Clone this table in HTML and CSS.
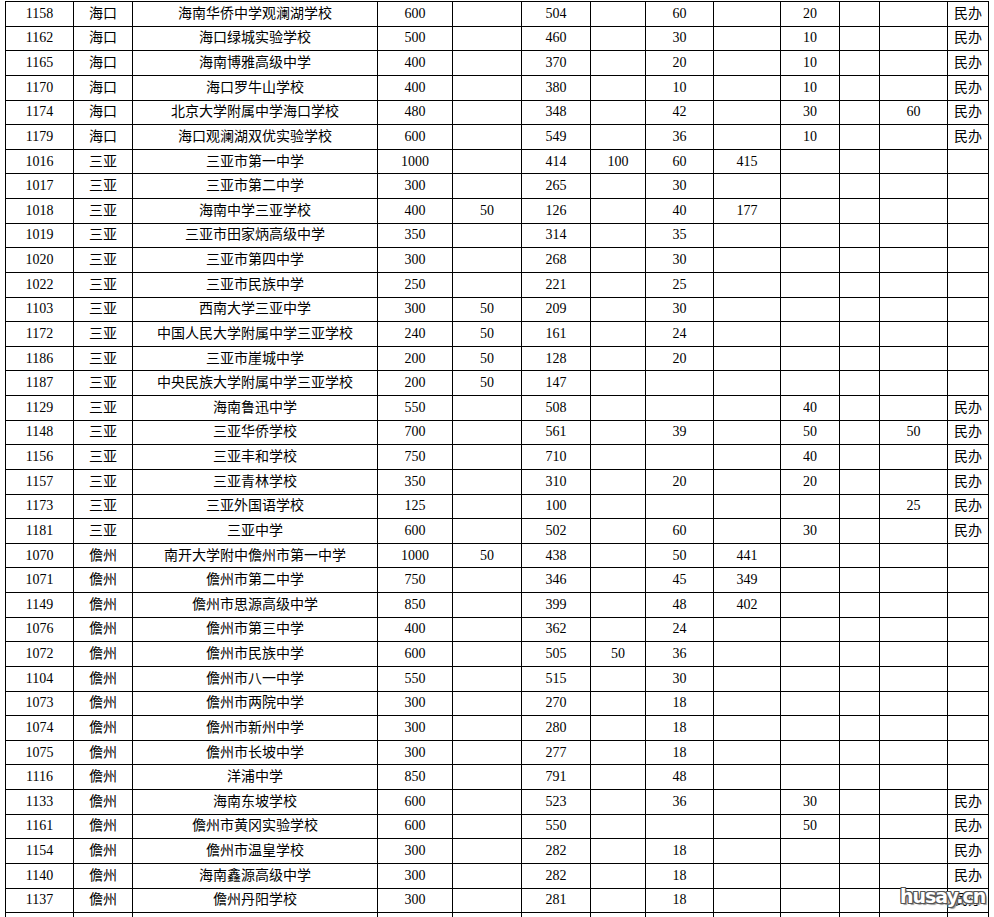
FILE: index.html
```html
<!DOCTYPE html>
<html lang="zh-CN">
<head>
<meta charset="utf-8">
<title>招生计划表</title>
<link rel="stylesheet" href="styles.css">
</head>
<body>
<div class="page">
<table class="plan">
<colgroup>
<col class="c1"><col class="c2"><col class="c3"><col class="c4"><col class="c5"><col class="c6"><col class="c7"><col class="c8"><col class="c9"><col class="c10"><col class="c11"><col class="c12"><col class="c13">
</colgroup>
<tbody>
<tr><td>1158</td><td>海口</td><td>海南华侨中学观澜湖学校</td><td>600</td><td></td><td>504</td><td></td><td>60</td><td></td><td>20</td><td></td><td></td><td>民办</td></tr>
<tr><td>1162</td><td>海口</td><td>海口绿城实验学校</td><td>500</td><td></td><td>460</td><td></td><td>30</td><td></td><td>10</td><td></td><td></td><td>民办</td></tr>
<tr><td>1165</td><td>海口</td><td>海南博雅高级中学</td><td>400</td><td></td><td>370</td><td></td><td>20</td><td></td><td>10</td><td></td><td></td><td>民办</td></tr>
<tr><td>1170</td><td>海口</td><td>海口罗牛山学校</td><td>400</td><td></td><td>380</td><td></td><td>10</td><td></td><td>10</td><td></td><td></td><td>民办</td></tr>
<tr><td>1174</td><td>海口</td><td>北京大学附属中学海口学校</td><td>480</td><td></td><td>348</td><td></td><td>42</td><td></td><td>30</td><td></td><td>60</td><td>民办</td></tr>
<tr><td>1179</td><td>海口</td><td>海口观澜湖双优实验学校</td><td>600</td><td></td><td>549</td><td></td><td>36</td><td></td><td>10</td><td></td><td></td><td>民办</td></tr>
<tr><td>1016</td><td>三亚</td><td>三亚市第一中学</td><td>1000</td><td></td><td>414</td><td>100</td><td>60</td><td>415</td><td></td><td></td><td></td><td></td></tr>
<tr><td>1017</td><td>三亚</td><td>三亚市第二中学</td><td>300</td><td></td><td>265</td><td></td><td>30</td><td></td><td></td><td></td><td></td><td></td></tr>
<tr><td>1018</td><td>三亚</td><td>海南中学三亚学校</td><td>400</td><td>50</td><td>126</td><td></td><td>40</td><td>177</td><td></td><td></td><td></td><td></td></tr>
<tr><td>1019</td><td>三亚</td><td>三亚市田家炳高级中学</td><td>350</td><td></td><td>314</td><td></td><td>35</td><td></td><td></td><td></td><td></td><td></td></tr>
<tr><td>1020</td><td>三亚</td><td>三亚市第四中学</td><td>300</td><td></td><td>268</td><td></td><td>30</td><td></td><td></td><td></td><td></td><td></td></tr>
<tr><td>1022</td><td>三亚</td><td>三亚市民族中学</td><td>250</td><td></td><td>221</td><td></td><td>25</td><td></td><td></td><td></td><td></td><td></td></tr>
<tr><td>1103</td><td>三亚</td><td>西南大学三亚中学</td><td>300</td><td>50</td><td>209</td><td></td><td>30</td><td></td><td></td><td></td><td></td><td></td></tr>
<tr><td>1172</td><td>三亚</td><td>中国人民大学附属中学三亚学校</td><td>240</td><td>50</td><td>161</td><td></td><td>24</td><td></td><td></td><td></td><td></td><td></td></tr>
<tr><td>1186</td><td>三亚</td><td>三亚市崖城中学</td><td>200</td><td>50</td><td>128</td><td></td><td>20</td><td></td><td></td><td></td><td></td><td></td></tr>
<tr><td>1187</td><td>三亚</td><td>中央民族大学附属中学三亚学校</td><td>200</td><td>50</td><td>147</td><td></td><td></td><td></td><td></td><td></td><td></td><td></td></tr>
<tr><td>1129</td><td>三亚</td><td>海南鲁迅中学</td><td>550</td><td></td><td>508</td><td></td><td></td><td></td><td>40</td><td></td><td></td><td>民办</td></tr>
<tr><td>1148</td><td>三亚</td><td>三亚华侨学校</td><td>700</td><td></td><td>561</td><td></td><td>39</td><td></td><td>50</td><td></td><td>50</td><td>民办</td></tr>
<tr><td>1156</td><td>三亚</td><td>三亚丰和学校</td><td>750</td><td></td><td>710</td><td></td><td></td><td></td><td>40</td><td></td><td></td><td>民办</td></tr>
<tr><td>1157</td><td>三亚</td><td>三亚青林学校</td><td>350</td><td></td><td>310</td><td></td><td>20</td><td></td><td>20</td><td></td><td></td><td>民办</td></tr>
<tr><td>1173</td><td>三亚</td><td>三亚外国语学校</td><td>125</td><td></td><td>100</td><td></td><td></td><td></td><td></td><td></td><td>25</td><td>民办</td></tr>
<tr><td>1181</td><td>三亚</td><td>三亚中学</td><td>600</td><td></td><td>502</td><td></td><td>60</td><td></td><td>30</td><td></td><td></td><td>民办</td></tr>
<tr><td>1070</td><td>儋州</td><td>南开大学附中儋州市第一中学</td><td>1000</td><td>50</td><td>438</td><td></td><td>50</td><td>441</td><td></td><td></td><td></td><td></td></tr>
<tr><td>1071</td><td>儋州</td><td>儋州市第二中学</td><td>750</td><td></td><td>346</td><td></td><td>45</td><td>349</td><td></td><td></td><td></td><td></td></tr>
<tr><td>1149</td><td>儋州</td><td>儋州市思源高级中学</td><td>850</td><td></td><td>399</td><td></td><td>48</td><td>402</td><td></td><td></td><td></td><td></td></tr>
<tr><td>1076</td><td>儋州</td><td>儋州市第三中学</td><td>400</td><td></td><td>362</td><td></td><td>24</td><td></td><td></td><td></td><td></td><td></td></tr>
<tr><td>1072</td><td>儋州</td><td>儋州市民族中学</td><td>600</td><td></td><td>505</td><td>50</td><td>36</td><td></td><td></td><td></td><td></td><td></td></tr>
<tr><td>1104</td><td>儋州</td><td>儋州市八一中学</td><td>550</td><td></td><td>515</td><td></td><td>30</td><td></td><td></td><td></td><td></td><td></td></tr>
<tr><td>1073</td><td>儋州</td><td>儋州市两院中学</td><td>300</td><td></td><td>270</td><td></td><td>18</td><td></td><td></td><td></td><td></td><td></td></tr>
<tr><td>1074</td><td>儋州</td><td>儋州市新州中学</td><td>300</td><td></td><td>280</td><td></td><td>18</td><td></td><td></td><td></td><td></td><td></td></tr>
<tr><td>1075</td><td>儋州</td><td>儋州市长坡中学</td><td>300</td><td></td><td>277</td><td></td><td>18</td><td></td><td></td><td></td><td></td><td></td></tr>
<tr><td>1116</td><td>儋州</td><td>洋浦中学</td><td>850</td><td></td><td>791</td><td></td><td>48</td><td></td><td></td><td></td><td></td><td></td></tr>
<tr><td>1133</td><td>儋州</td><td>海南东坡学校</td><td>600</td><td></td><td>523</td><td></td><td>36</td><td></td><td>30</td><td></td><td></td><td>民办</td></tr>
<tr><td>1161</td><td>儋州</td><td>儋州市黄冈实验学校</td><td>600</td><td></td><td>550</td><td></td><td></td><td></td><td>50</td><td></td><td></td><td>民办</td></tr>
<tr><td>1154</td><td>儋州</td><td>儋州市温皇学校</td><td>300</td><td></td><td>282</td><td></td><td>18</td><td></td><td></td><td></td><td></td><td>民办</td></tr>
<tr><td>1140</td><td>儋州</td><td>海南鑫源高级中学</td><td>300</td><td></td><td>282</td><td></td><td>18</td><td></td><td></td><td></td><td></td><td>民办</td></tr>
<tr><td>1137</td><td>儋州</td><td>儋州丹阳学校</td><td>300</td><td></td><td>281</td><td></td><td>18</td><td></td><td></td><td></td><td></td><td>民办</td></tr>
<tr><td>1153</td><td>儋州</td><td>儋州川绵中学</td><td>300</td><td></td><td>280</td><td></td><td>18</td><td></td><td></td><td></td><td></td><td>民办</td></tr>
</tbody>
</table>
<div class="watermark">husay.cn</div>
</div>
</body>
</html>
```

FILE: styles.css
```css
html, body {
  margin: 0;
  padding: 0;
  background: #ffffff;
}

.page {
  position: relative;
  width: 994px;
  height: 917px;
  overflow: hidden;
}

.plan {
  margin: 1px 0 0 5px;
  width: 984px;
  table-layout: fixed;
  border-collapse: collapse;
  font-family: "Liberation Serif", "Noto Sans CJK SC", serif;
  font-size: 14px;
  color: #000;
}

.plan tr {
  height: 24.64px;
}

.plan td {
  border: 1px solid #000;
  padding: 0;
  text-align: center;
  vertical-align: middle;
  white-space: nowrap;
  overflow: hidden;
  line-height: 16px;
}

.c1 { width: 68px; }
.c2 { width: 59px; }
.c3 { width: 245px; }
.c4 { width: 75px; }
.c5 { width: 69px; }
.c6 { width: 69px; }
.c7 { width: 55px; }
.c8 { width: 68px; }
.c9 { width: 67px; }
.c10 { width: 59px; }
.c11 { width: 40px; }
.c12 { width: 68px; }
.c13 { width: 41px; }

.watermark {
  position: absolute;
  left: 900px;
  top: 885px;
  font-family: "DejaVu Sans", sans-serif;
  font-weight: bold;
  font-size: 19px;
  letter-spacing: -1px;
  color: #ffffff;
  text-shadow:
    -1px -1px 0 #555, 1px -1px 0 #555, -1px 1px 0 #555, 1px 1px 0 #555,
    0 -1px 0 #555, 0 1px 0 #555, -1px 0 0 #555, 1px 0 0 #555,
    2px 2px 1px #999;
}
```
